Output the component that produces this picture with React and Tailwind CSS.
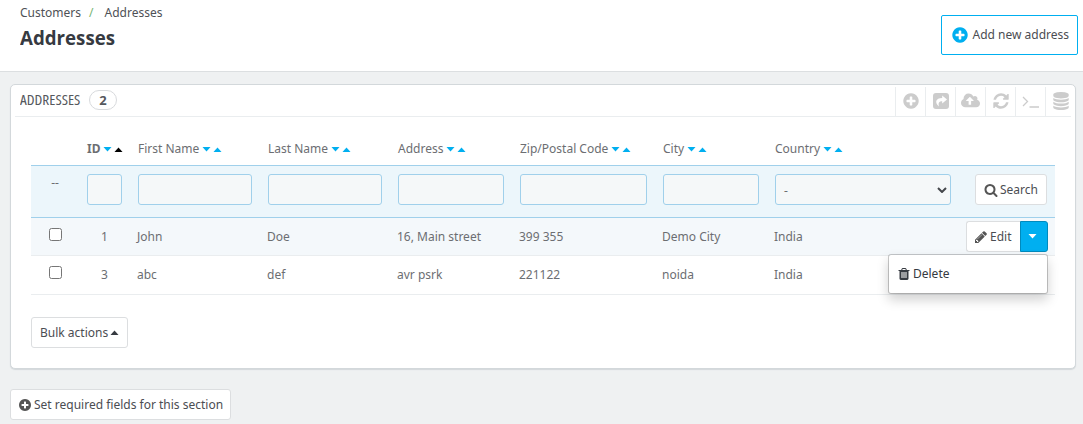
import React from "react";

const PLUS =
  "M1344 960v-128q0-26-19-45t-45-19h-256v-256q0-26-19-45t-45-19h-128q-26 0-45 19t-19 45v256h-256q-26 0-45 19t-19 45v128q0 26 19 45t45 19h256v256q0 26 19 45t45 19h128q26 0 45-19t19-45v-256h256q26 0 45-19t19-45zm320-64q0 209-103 385.5t-279.5 279.5-385.5 103-385.5-103-279.5-279.5-103-385.5 103-385.5 279.5-279.5 385.5-103 385.5 103 279.5 279.5 103 385.5z";
const REFRESH =
  "M1639 1056q0 5-1 7-64 268-268 434.5t-478 166.5q-146 0-282.5-55t-243.5-157l-129 129q-19 19-45 19t-45-19-19-45v-448q0-26 19-45t45-19h448q26 0 45 19t19 45-19 45l-137 137q71 66 161 102t187 36q134 0 250-65t186-179q11-17 53-117 8-23 30-23h192q13 0 22.5 9.5t9.5 22.5zm25-800v448q0 26-19 45t-45 19h-448q-26 0-45-19t-19-45 19-45l138-138q-148-137-349-137-134 0-250 65t-186 179q-11 17-53 117-8 23-30 23h-199q-13 0-22.5-9.5t-9.5-22.5v-7q65-268 270-434.5t480-166.5q146 0 284 55.5t245 156.5l130-129q19-19 45-19t45 19 19 45z";
const SEARCH =
  "M1216 832q0-185-131.5-316.5t-316.5-131.5-316.5 131.5-131.5 316.5 131.5 316.5 316.5 131.5 316.5-131.5 131.5-316.5zm512 832q0 52-38 90t-90 38q-54 0-90-38l-343-342q-179 124-399 124-143 0-273.5-55.5t-225-150-150-225-55.5-273.5 55.5-273.5 150-225 225-150 273.5-55.5 273.5 55.5 225 150 150 225 55.5 273.5q0 220-124 399l343 343q37 37 37 90z";
const PENCIL =
  "M491 1536l91-91-235-235-91 91v107h128v128h107zm523-928q0-22-22-22-10 0-17 7l-542 542q-7 7-7 17 0 22 22 22 10 0 17-7l542-542q7-7 7-17zm-54-192l416 416-832 832h-416v-416zm683 96q0 53-37 90l-166 166-416-416 166-165q36-38 90-38 53 0 91 38l235 234q37 39 37 91z";
const TRASH =
  "M704 1376v-704q0-14-9-23t-23-9h-64q-14 0-23 9t-9 23v704q0 14 9 23t23 9h64q14 0 23-9t9-23zm256 0v-704q0-14-9-23t-23-9h-64q-14 0-23 9t-9 23v704q0 14 9 23t23 9h64q14 0 23-9t9-23zm256 0v-704q0-14-9-23t-23-9h-64q-14 0-23 9t-9 23v704q0 14 9 23t23 9h64q14 0 23-9t9-23zm-544-992h448l-48-117q-7-9-17-11h-317q-10 2-17 11zm928 32v64q0 14-9 23t-23 9h-96v948q0 83-47 143.5t-113 60.5h-832q-66 0-113-58.5t-47-141.5v-952h-96q-14 0-23-9t-9-23v-64q0-14 9-23t23-9h309l70-167q15-37 54-63t79-26h320q40 0 79 26t54 63l70 167h309q14 0 23 9t9 23z";
const CLOUD =
  "M1280 864q0-14-9-23l-352-352q-9-9-23-9t-23 9l-351 351q-10 12-10 24 0 14 9 23t23 9h224v352q0 13 9.5 22.5t22.5 9.5h192q13 0 22.5-9.5t9.5-22.5v-352h224q13 0 22.5-9.5t9.5-22.5zm640 288q0 159-112.5 271.5t-271.5 112.5h-1088q-185 0-316.5-131.5t-131.5-316.5q0-130 70-240t188-165q-2-30-2-43 0-212 150-362t362-150q156 0 285.5 87t188.5 231q71-62 166-62 106 0 181 75t75 181q0 76-41 138 130 31 213.5 135.5t83.5 238.5z";
const DATABASE =
  "M896 768q237 0 443-43t325-127v170q0 69-103 128t-280 93.5-385 34.5-385-34.5-280-93.5-103-128v-170q119 84 325 127t443 43zm0 768q237 0 443-43t325-127v170q0 69-103 128t-280 93.5-385 34.5-385-34.5-280-93.5-103-128v-170q119 84 325 127t443 43zm0-384q237 0 443-43t325-127v170q0 69-103 128t-280 93.5-385 34.5-385-34.5-280-93.5-103-128v-170q119 84 325 127t443 43zm0-1152q208 0 385 34.5t280 93.5 103 128v128q0 69-103 128t-280 93.5-385 34.5-385-34.5-280-93.5-103-128v-128q0-69 103-128t280-93.5 385-34.5z";

function Glyph({ d, className, box = "0 0 1792 1792" }) {
  return (
    <svg viewBox={box} className={`shrink-0 fill-current ${className}`}>
      <path d={d} />
    </svg>
  );
}

function Caret({ up, className = "" }) {
  return (
    <svg viewBox="0 0 9 5" className={`h-[5px] w-[9px] shrink-0 fill-current ${className}`}>
      <path d={up ? "M0.500 5L4.500 0.500L8.500 5z" : "M0.500 0L4.500 4.500L8.500 0z"} />
    </svg>
  );
}

const tools = [
  <Glyph d={PLUS} className="size-[18px]" />,
  <svg viewBox="0 0 16 16" className="size-4">
    <rect width="16" height="16" rx="3" className="fill-current" />
    <path d="M9.2 2.5L14 6.5L9.200 10.500V8.200C6 8.200 5 9.800 6 13.400C1.400 9.500 2.600 4.900 9.200 4.900z" fill="#fff" />
  </svg>,
  <Glyph d={CLOUD} box="0 0 1920 1792" className="h-[18px] w-[19px]" />,
  <Glyph d={REFRESH} className="size-[18px]" />,
  <svg viewBox="0 0 18 16" className="h-4 w-[18px]" fill="none" stroke="currentColor" strokeWidth="1.3">
    <path d="M1 4L5.500 8.500L1 13M7.500 14H17" />
  </svg>,
  <Glyph d={DATABASE} className="size-[18px]" />,
];

const columns = [
  { label: "ID", sorted: true },
  { label: "First Name" },
  { label: "Last Name" },
  { label: "Address" },
  { label: "Zip/Postal Code" },
  { label: "City" },
  { label: "Country" },
];

const rows = [
  ["1", "John", "Doe", "16, Main street", "399 355", "Demo City", "India"],
  ["3", "abc", "def", "avr psrk", "221122", "noida", "India"],
];

const grid =
  "grid grid-cols-[48px_51px_130px_130px_122px_143px_112px_192px_1fr]";
const button =
  "flex items-center rounded-[3px] border border-[#dcdee0] bg-white text-[#4b4d52] whitespace-nowrap";

export default function App() {
  return (
    <div className="h-[424px] overflow-hidden bg-[#eff1f2] font-['Noto_Sans',sans-serif] text-[12px] leading-4 text-[#6c6e72]">
      <header className="flex h-[72px] justify-between border-b border-[#dcdfe1] bg-white pl-5 pr-[5px]">
        <div className="pt-[5px] text-[#4e5156]">
          <nav className="flex">
            <span>Customers</span>
            <span className="ml-2 mr-[11px] text-[#78b573]">/</span>
            <span>Addresses</span>
          </nav>
          <h1 className="mt-[5px] w-fit origin-left scale-x-[0.935] font-['Open_Sans',sans-serif] text-[20px] font-bold leading-6 text-[#363a41]">
            Addresses
          </h1>
        </div>
        <button className="mt-[15px] flex h-10 w-[137px] items-center rounded-[2px] border border-[#00aff0] pl-[9px] text-[#4b4d52] whitespace-nowrap">
          <Glyph d={PLUS} className="mr-[3.5px] size-[18px] text-[#00aff0]" />
          Add new address
        </button>
      </header>

      <section className="ml-[10px] mt-3 h-[285px] w-[1066px] rounded-[5px] border border-[#d3d8db] bg-white shadow-[0_1px_1px_#d3d8db]">
        <div className="mx-1 flex h-8 items-center justify-between border-b border-[#eaedef]">
          <div className="flex items-center pb-0.5 pl-[5px] text-[#55585d]">
            <div className="w-[69px]">
              <h2 className="w-fit origin-left scale-x-[1.09] font-['Open_Sans',sans-serif] text-[14px] whitespace-nowrap [font-stretch:75%]">
                ADDRESSES
              </h2>
            </div>
            <span className="flex h-5 w-7 items-center justify-center rounded-full border border-[#d8dadd] text-[13px] font-bold">
              2
            </span>
          </div>
          <div className="-mr-1 flex h-full pt-0.5 text-[#cccccc]">
            {tools.map((icon, i) => (
              <span key={i} className="flex w-[30px] items-center justify-center border-l border-[#eaedef] pb-px">
                {icon}
              </span>
            ))}
          </div>
        </div>

        <div className="mx-5 mt-6">
          <div className={`${grid} h-6`}>
            <span />
            {columns.map(({ label, sorted }) => (
              <div key={label} className={`flex h-4 items-center gap-0.5 whitespace-nowrap pl-2 ${sorted ? "font-bold" : ""}`}>
                <span className="mr-[0.5px]">{label}</span>
                <Caret className="text-[#00aff0]" />
                <Caret up className={sorted ? "text-black" : "text-[#00aff0]"} />
              </div>
            ))}
          </div>

          <div className={`${grid} h-[53px] border-y border-[#a0d0eb] bg-[#ecf6fb]`}>
            <span className="flex justify-center pt-[9px]">--</span>
            {columns.slice(0, 6).map(({ label }) => (
              <div key={label} className="px-2 pt-2">
                <input aria-label={label} className="h-[31px] w-full rounded-[3px] border border-[#a0d0eb] bg-[#f5f8f9]" />
              </div>
            ))}
            <div className="px-2 pt-2">
              <div className="flex h-[31px] items-center justify-between rounded-[3px] border border-[#a0d0eb] bg-[#f5f8f9] px-2">
                <span className="pt-0.5">-</span>
                <svg viewBox="0 0 10 6" className="-mr-[5px] h-1.5 w-2.5" fill="none" stroke="#44474b" strokeWidth="2">
                  <path d="M1 1L5 5L9 1" />
                </svg>
              </div>
            </div>
            <div className="flex justify-end pr-2 pt-2">
              <button className={`${button} h-[31px] w-[72px] pl-2`}>
                <Glyph d={SEARCH} className="mr-0.5 size-[14px] text-[#555]" />
                Search
              </button>
            </div>
          </div>

          {rows.map((row, r) => (
            <div
              key={row[0]}
              className={`${grid} relative border-b border-[#eaedef] ${r === 0 ? "h-[38px] bg-[#f4f8fb]" : "h-[39px]"}`}
            >
              <div className="flex justify-center pt-[10px]">
                <span className="size-[13px] rounded-[2.5px] border border-[#767676] bg-white" />
              </div>
              {row.map((cell, i) => (
                <span key={i} className={`whitespace-nowrap pt-[11px] ${i === 0 ? "text-center" : "pl-[7px]"}`}>
                  {cell}
                </span>
              ))}
              {r === 0 && (
                <div className="flex justify-end pr-[7px] pt-[3px]">
                  <button className={`${button} h-[31px] w-[54px] rounded-r-none border-r-0 pl-[7px]`}>
                    <Glyph d={PENCIL} className="mr-0.5 size-[14px] text-[#555]" />
                    Edit
                  </button>
                  <button className="flex h-[31px] w-7 items-center justify-center rounded-r-[3px] border border-[#008abd] bg-[#00aff0] pr-[3px] text-white">
                    <Caret />
                  </button>
                  <div className="absolute right-[7px] top-9 z-10 flex h-10 w-[160px] items-center rounded-[3px] border border-black/20 bg-white bg-clip-padding pl-2 text-[#363a41] shadow-[0_6px_12px_rgba(0,0,0,0.175)]">
                    <Glyph d={TRASH} className="mr-0.5 size-[14px]" />
                    Delete
                  </div>
                </div>
              )}
            </div>
          ))}

          <button className={`${button} mt-[22px] h-[31px] w-[97px] pl-2`}>
            <span className="mr-0.5">Bulk actions</span>
            <Caret up className="text-[#363a41]" />
          </button>
        </div>
      </section>

      <button className={`${button} ml-[10px] mt-5 h-[31px] w-[221px] pl-[7px]`}>
        <Glyph d={PLUS} className="mr-0.5 size-[14px] text-[#555]" />
        Set required fields for this section
      </button>
    </div>
  );
}
